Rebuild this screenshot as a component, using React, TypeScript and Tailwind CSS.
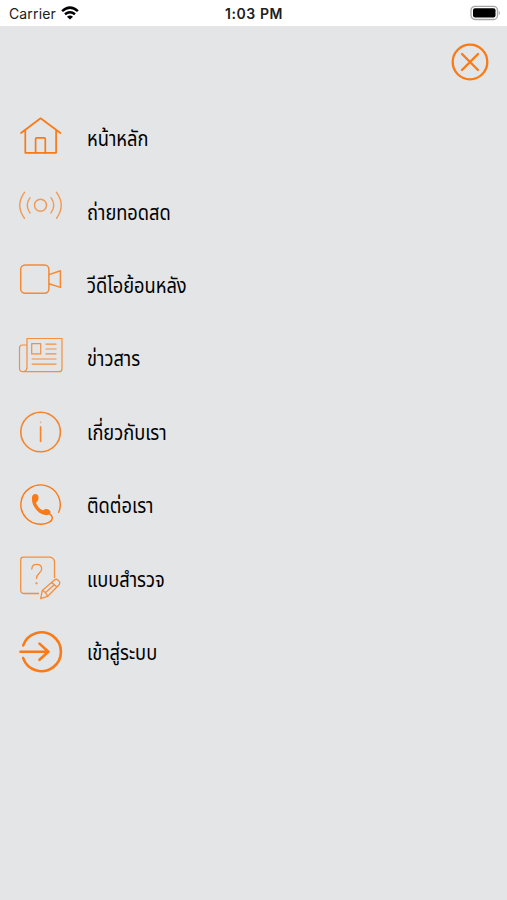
import type { ReactNode } from "react";

type Item = { label: string; stroke: number; opacity?: number; icon: ReactNode };

const items: Item[] = [
  {
    label: "หน้าหลัก",
    stroke: 1.7,
    icon: (
      <>
        <path d="M3 31 22.6 16.3 42.4 31M7.3 28v22.8h30.8V28" />
        <path d="M17.6 50.8V37q0-1.2 1.2-1.2h7.3q1.2 0 1.2 1.2v13.8" />
      </>
    ),
  },
  {
    label: "ถ่ายทอดสด",
    stroke: 1.4,
    opacity: 0.7,
    icon: (
      <>
        <circle cx="22.5" cy="30.3" r="6" />
        <path d="M12 22.7q-5.5 7.6 0 15.2M33 22.7q5.5 7.6 0 15.2M6.5 17.3q-9.5 13 0 26M38.5 17.3q9.5 13 0 26" />
      </>
    ),
  },
  {
    label: "วีดีโอย้อนหลัง",
    stroke: 1.5,
    opacity: 0.85,
    icon: (
      <>
        <rect x="2.7" y="16" width="28.2" height="28.3" rx="4.5" />
        <path d="m31 25.6 11.4-3.8v16.6L31 34.7" />
      </>
    ),
  },
  {
    label: "ข่าวสาร",
    stroke: 1.2,
    opacity: 0.8,
    icon: (
      <>
        <path d="M9 46V16.5h35v30.2q0 3-3 3H5q-3.5 0-3.5-3.5V26q0-3 3-3H9M9 45q0 3.5-3 4.5" />
        <rect x="13.7" y="21.6" width="9" height="10.3" />
        <path d="M28 22.2H38M28 27H38M28 31.8H38M14.2 37H38M14.2 42.2H38" />
      </>
    ),
  },
  {
    label: "เกี่ยวกับเรา",
    stroke: 1.6,
    opacity: 0.9,
    icon: (
      <>
        <circle cx="22.6" cy="36" r="19.8" />
        <path d="M22.6 30.8v14.7" />
        <path d="M22.6 26v.6" opacity=".5" />
      </>
    ),
  },
  {
    label: "ติดต่อเรา",
    stroke: 1.4,
    icon: (
      <>
        <path d="M40.7 43.3A19.7 19.7 0 1 0 23 55.3c6.300-.2 12.400-3.100 11.200-7.300-.5-1.700-1.700-2.700-3.200-3.700" />
        <path
          d="M16.200 25.200c2.300-.6 4 .5 4.200 2.600.2 2.100 0 3.800-1.200 4.600-1 .7-1.500 1-.8 2.300 1.300 2.800 3.500 5.200 6 6.500 1 .5 1.500-.5 2.800-1.100 2-.7 4.600.4 5.200 2.400.5 1.900-.7 3.100-2.400 3.500-3.500.7-7.700-1.200-10.500-4-3.200-3.200-5.600-7.400-5.600-12.300 0-2.400.6-4 2.300-4.500Z"
          className="fill-[#f97a16]"
          stroke="none"
        />
      </>
    ),
  },
  {
    label: "แบบสำรวจ",
    stroke: 1.3,
    opacity: 0.8,
    icon: (
      <>
        <path d="M20.500 51.500H6.200q-3.500 0-3.500-3.500V18q0-2.800 2.800-2.800H32q4.500 1 4.500 5V35.500" />
        <path d="M13.800 27c.1-3.100 2-4.700 4.900-4.700s5 1.700 5 4.500c0 4.400-5.200 4.700-5.200 9.600" />
        <circle cx="18.500" cy="41.300" r=".5" />
        <path d="m22.700 56.700 1.600-8.200L36.700 37.700q2-1.200 4 .9 2 2.300.4 4.200L29.500 54.500ZM24.300 48.500q4 1.600 5.200 6M33.700 40.400l5.200 4.600M27.300 50.800l8.700-7.900" />
      </>
    ),
  },
  {
    label: "เข้าสู่ระบบ",
    stroke: 2.6,
    icon: (
      <>
        <path d="M5.200 29.400A19.400 19.400 0 1 1 5.200 42.100" />
        <path d="M2.500 35.700h28M21.500 27.600l8.800 8.100-8.800 8.100" />
      </>
    ),
  },
];

function StatusBar() {
  return (
    <header className="grid h-[26px] grid-cols-3 items-center bg-white font-[Inter,'Liberation_Sans',sans-serif] text-[#202020]">
      <div className="flex items-center gap-[5px] pl-[9px]">
        <span className="pt-0.5 text-[14px] leading-none tracking-[0.01em]">Carrier</span>
        <svg className="h-[14px] w-[18px]" viewBox="0 0 18 14" fill="none" stroke="#000" strokeWidth="2.5">
          <path d="M1.1 5.2Q9-2 16.9 5.2M4 8.3q5-4.2 10 0" />
          <path d="m9 13.6-3-2.9q3-2.3 6 0Z" fill="#000" stroke="none" />
        </svg>
      </div>
      <span className="pt-0.5 pl-px text-center text-[14px] leading-none font-semibold tracking-[0.04em]">1:03 PM</span>
      <svg className="mr-[6px] h-4 w-[31px] justify-self-end" viewBox="0 0 31 16">
        <rect x="1" y="1.3" width="26.5" height="13.2" rx="4" fill="#fff" stroke="#a5a5a5" strokeWidth="1.3" />
        <rect x="3" y="3.2" width="22.5" height="9.4" rx="2" fill="#000" />
        <path d="M28.8 5.6q2.3 2.3 0 4.6Z" fill="#a5a5a5" />
      </svg>
    </header>
  );
}

export default function App() {
  return (
    <div className="flex h-[900px] w-[507px] flex-col overflow-hidden bg-[#e3e5e7]">
      <StatusBar />
      <div className="flex h-[76px] shrink-0 justify-end pt-[17px] pr-[18px]">
        <button aria-label="ปิด" className="size-[38px]">
          <svg className="size-full" viewBox="0 0 38 38" fill="none" stroke="#f97a16" strokeWidth="2.3" strokeLinecap="round">
            <circle cx="19" cy="19" r="17.3" />
            <path d="m11 11 16 16M27 11 11 27" />
          </svg>
        </button>
      </div>
      <nav className="flex flex-col pl-[18px]">
        {items.map((item) => (
          <a key={item.label} className="flex h-[73.4px] items-center gap-[23px]">
            <svg
              className="h-full w-[46px] shrink-0"
              viewBox="0 0 46 73.4"
              fill="none"
              stroke="#f97a16"
              strokeWidth={item.stroke}
              strokeLinejoin="round"
              strokeLinecap="round"
              opacity={item.opacity}
            >
              {item.icon}
            </svg>
            <span className="origin-left scale-x-[0.83] pt-[3px] font-['Noto_Sans_Thai','Noto_Sans',sans-serif] text-[22px] leading-none whitespace-nowrap text-black">
              {item.label}
            </span>
          </a>
        ))}
      </nav>
    </div>
  );
}
